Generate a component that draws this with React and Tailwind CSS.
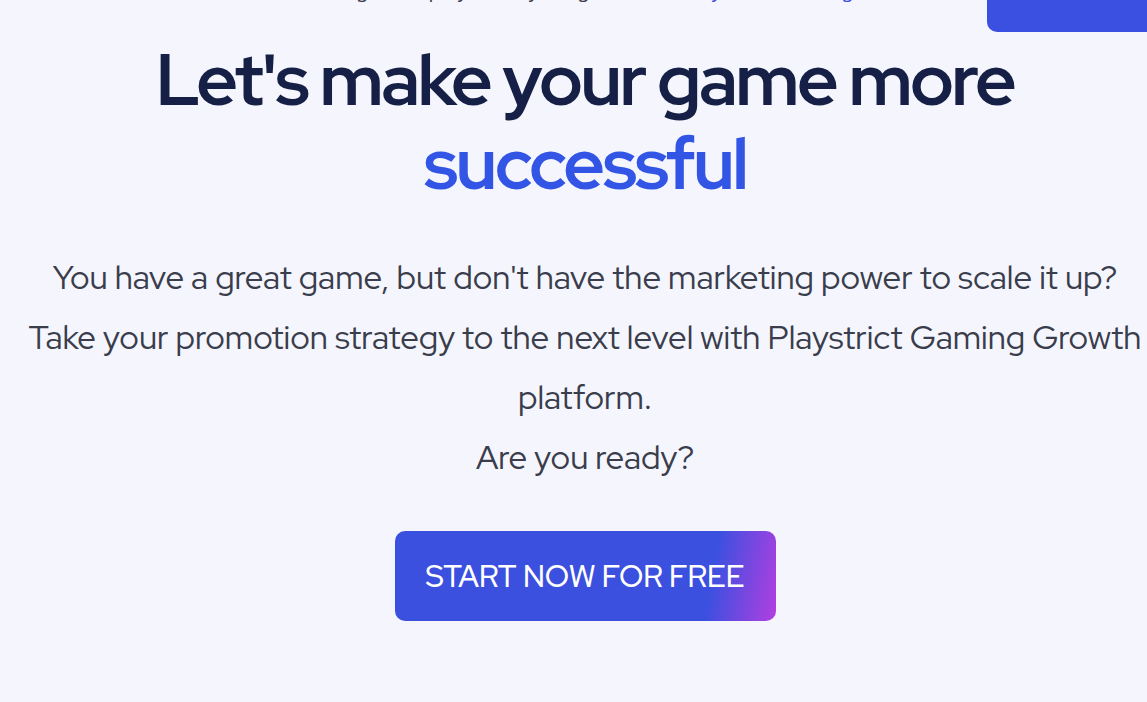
const App = () => {
  return (
    <div
      className="relative w-full h-[702px] overflow-hidden bg-[#f5f6fd]"
      style={{ fontFamily: "'Red Hat Display', Inter, 'Noto Sans', sans-serif" }}
    >
      {/* header button, scrolled mostly out of view */}
      <div className="absolute top-[-20px] left-[987px] w-[200px] h-[52px] rounded-[10px] bg-[#3b50e0]" />

      <div className="w-[1170px] flex flex-col items-center text-center">
        <p className="mt-[-24px] h-[30px] text-[22px] leading-[30px] text-[#3a3d4c]">
          Bring more players to your game with{" "}
          <span className="text-[#3b50e0]">Playstrict Gaming</span>
        </p>

        <h1 className="mt-[32px] text-[72px] leading-[84px] font-bold tracking-[-0.035em] text-[#161f45]">
          Let's make your game more
          <br />
          <span className="text-[#3355e5]">successful</span>
        </h1>

        <p className="mt-[41px] text-[33px] leading-[60px] font-normal text-[#3a3d4c]">
          You have a great game, but don't have the marketing power to scale it up?
          <br />
          Take your promotion strategy to the next level with Playstrict Gaming Growth
          <br />
          platform.
          <br />
          Are you ready?
        </p>

        <button className="mt-[44px] w-[381px] h-[90px] rounded-[10px] bg-[linear-gradient(100deg,#3c50e0_82%,#b13fe0)] text-white text-[30px] font-medium">
          START NOW FOR FREE
        </button>
      </div>
    </div>
  );
};

export default App;
